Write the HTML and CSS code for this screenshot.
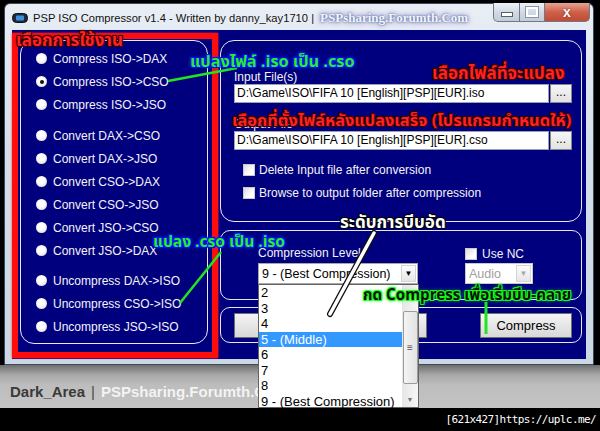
FILE: index.html
```html
<!DOCTYPE html>
<html lang="th">
<head>
    <meta charset="UTF-8">
    <title>PSP ISO Compressor v1.4</title>
    <link rel="stylesheet" href="styles.css">
</head>
<body>
<div class="screen">
    <div class="window">
        <div class="titlebar">
            <svg class="app-icon" width="16" height="10" viewBox="0 0 16 10">
                <rect x="0.5" y="0.5" width="15" height="9" rx="4" fill="#1d2a3a" stroke="#0b1118"/>
                <rect x="4" y="2.5" width="8" height="5" rx="1" fill="#3f8fe0"/>
            </svg>
            <span class="title">PSP ISO Compressor v1.4 - Written by danny_kay1710 |</span>
            <span class="title-site">PSPsharing.Forumth.Com</span>
            <div class="caption-buttons">
                <div class="cap-btn cap-min"><span class="min-bar"></span></div>
                <div class="cap-btn cap-max"><span class="max-box"></span></div>
                <div class="cap-btn cap-close">x</div>
            </div>
        </div>
        <div class="client">
            <div class="mode-frame">
                <div class="groupbox modes">
                    <div class="radio-group">
                        <div class="radio"><span class="dot"></span>Compress ISO-&gt;DAX</div>
                        <div class="radio"><span class="dot checked"></span>Compress ISO-&gt;CSO</div>
                        <div class="radio"><span class="dot"></span>Compress ISO-&gt;JSO</div>
                    </div>
                    <div class="radio-group gap8">
                        <div class="radio"><span class="dot"></span>Convert DAX-&gt;CSO</div>
                        <div class="radio"><span class="dot"></span>Convert DAX-&gt;JSO</div>
                        <div class="radio"><span class="dot"></span>Convert CSO-&gt;DAX</div>
                        <div class="radio"><span class="dot"></span>Convert CSO-&gt;JSO</div>
                        <div class="radio"><span class="dot"></span>Convert JSO-&gt;CSO</div>
                        <div class="radio"><span class="dot"></span>Convert JSO-&gt;DAX</div>
                    </div>
                    <div class="radio-group gap7">
                        <div class="radio"><span class="dot"></span>Uncompress DAX-&gt;ISO</div>
                        <div class="radio"><span class="dot"></span>Uncompress CSO-&gt;ISO</div>
                        <div class="radio"><span class="dot"></span>Uncompress JSO-&gt;ISO</div>
                    </div>
                </div>
            </div>

            <div class="right-col">
                <div class="groupbox files">
                    <div class="field-label">Input File(s)</div>
                    <div class="file-row">
                        <div class="textbox">D:\Game\ISO\FIFA 10 [English][PSP][EUR].iso</div>
                        <div class="browse">...</div>
                    </div>
                    <div class="field-label second">Output File</div>
                    <div class="file-row">
                        <div class="textbox">D:\Game\ISO\FIFA 10 [English][PSP][EUR].cso</div>
                        <div class="browse">...</div>
                    </div>
                    <div class="checks">
                        <div class="check"><span class="box"></span>Delete Input file after conversion</div>
                        <div class="check"><span class="box"></span>Browse to output folder after compression</div>
                    </div>
                </div>

                <div class="groupbox level">
                    <div class="level-col wide">
                        <div class="field-label">Compression Level</div>
                        <div class="combo">
                            <span class="combo-text">9 - (Best Compression)</span>
                            <span class="combo-btn">&#9660;</span>
                        </div>
                    </div>
                    <div class="level-col narrow">
                        <div class="check nc"><span class="box"></span>Use NC</div>
                        <div class="combo disabled">
                            <span class="combo-text">Audio</span>
                            <span class="combo-btn">&#9660;</span>
                        </div>
                    </div>
                </div>

                <div class="groupbox actions">
                    <div class="push about">About</div>
                    <div class="push compress">Compress</div>
                </div>
            </div>
        </div>
    </div>

    <div class="desk">
        <span class="desk-name">Dark_Area</span>
        <span class="desk-bar">|</span>
        <span class="desk-site">PSPsharing.Forumth.Com</span>
    </div>
    <div class="strip">[621x427]https://uplc.me/</div>

    <!-- opened list of the compression combo -->
    <div class="droplist">
        <div class="items">
            <div class="item">2</div>
            <div class="item">3</div>
            <div class="item">4</div>
            <div class="item selected">5 - (Middle)</div>
            <div class="item">6</div>
            <div class="item">7</div>
            <div class="item">8</div>
            <div class="item">9 - (Best Compression)</div>
        </div>
        <div class="scrollbar">
            <span class="arrow up">&#9650;</span>
            <span class="thumb">&#8801;</span>
            <span class="arrow down">&#9660;</span>
        </div>
    </div>

    <!-- hand drawn notes on top of the screenshot -->
    <svg class="pointers" width="600" height="431" viewBox="0 0 600 431">
        <line x1="168" y1="81" x2="237" y2="68" stroke="#1fe61f" stroke-width="2.5"/>
        <line x1="180" y1="303" x2="221" y2="252" stroke="#1fe61f" stroke-width="2.5"/>
        <line x1="486" y1="302" x2="486" y2="334" stroke="#1fe61f" stroke-width="3"/>
        <line x1="374" y1="233" x2="330" y2="314" stroke="#111" stroke-width="6" stroke-linecap="round"/>
        <line x1="374" y1="233" x2="330" y2="314" stroke="#fff" stroke-width="3.5" stroke-linecap="round"/>
    </svg>
    <div class="note red note-mode">เลือกการใช้งาน</div>
    <div class="note green note-iso">แปลงไฟล์ .iso เป็น .cso</div>
    <div class="note red note-input">เลือกไฟล์ที่จะแปลง</div>
    <div class="note red note-output">เลือกที่ตั้งไฟล์หลังแปลงเสร็จ (โปรแกรมกำหนดให้)</div>
    <div class="note white note-level">ระดับการบีบอัด</div>
    <div class="note green note-cso">แปลง .cso เป็น .iso</div>
    <div class="note black note-go">กด Compress เพื่อเริ่มบีบ-คลาย</div>
</div>
</body>
</html>
```

FILE: styles.css
```css
body {
    margin: 0;
    background: #000;
    font-family: 'Liberation Sans', Arial, sans-serif;
    font-size: 12px;
}

.screen {
    position: relative;
    width: 600px;
    height: 431px;
    overflow: hidden;
    background: #000;
    display: flex;
    flex-direction: column;
}

/* window frame */
.window {
    margin: 3px 6px 0 4px;
    height: 362px;
    box-sizing: border-box;
    border: 1px solid #3d4a58;
    border-radius: 6px 6px 0 0;
    padding: 0 7px 5px 7px;
    background: linear-gradient(#e9eef5, #d5dfeb 40%, #cbd7e5);
    display: flex;
    flex-direction: column;
}

.titlebar {
    height: 26px;
    display: flex;
    align-items: center;
    gap: 3px;
    position: relative;
}

.app-icon {
    margin: 2px 2px 0 0;
}

.title {
    color: #111;
    font-size: 11.2px;
    margin-top: 1px;
}

.title-site {
    font-family: 'Liberation Serif', serif;
    font-weight: 700;
    font-size: 13px;
    color: #f2f6ff;
    margin: 1px 0 0 3px;
    text-shadow: 0 0 2px #4a6294, 0 0 4px #7288b8, 0 0 7px #b090c8;
}

.caption-buttons {
    position: absolute;
    right: -4px;
    top: -1px;
    display: flex;
}

.cap-btn {
    height: 19px;
    box-sizing: border-box;
    border: 1px solid #6d7a8a;
    border-top: none;
    display: flex;
    align-items: center;
    justify-content: center;
    background: linear-gradient(#eef2f7, #d2dae4 50%, #c2ccd8);
}

.cap-min {
    width: 27px;
    border-radius: 0 0 0 5px;
}

.cap-max {
    width: 25px;
    border-left: none;
}

.cap-close {
    width: 45px;
    border-left: none;
    border-radius: 0 0 5px 0;
    background: linear-gradient(#e8a493, #d0604a 50%, #c24a32);
    color: #fff;
    font-weight: 700;
    font-size: 14px;
    line-height: 14px;
    text-shadow: 0 0 2px #6a1a0c;
}

.min-bar {
    width: 10px;
    height: 3px;
    background: #fff;
    border: 1px solid #55606e;
    margin-top: 5px;
}

.max-box {
    width: 8px;
    height: 6px;
    border: 2px solid #fff;
    outline: 1px solid #8a96a4;
}

/* client area */
.client {
    flex: 1;
    background: #00007f;
    display: flex;
    align-items: flex-start;
    padding-top: 3px;
    color: #f4f4f4;
}

.mode-frame {
    width: 206px;
    height: 325px;
    box-sizing: border-box;
    border: 6px solid #ff0d0d;
    box-shadow: 0 0 2px #ff3030;
}

.groupbox {
    box-sizing: border-box;
    border: 1px solid #e8e8f4;
    border-radius: 14px;
}

.modes {
    margin: 1px 0 0 2px;
    width: 188px;
    height: 304px;
    padding: 6px 0 0 15px;
}

.radio-group.gap8 {
    margin-top: 8px;
}

.radio-group.gap7 {
    margin-top: 7px;
}

.radio {
    height: 23px;
    display: flex;
    align-items: center;
    gap: 6px;
    white-space: nowrap;
}

.dot {
    width: 11px;
    height: 11px;
    border-radius: 50%;
    background: radial-gradient(circle at 45% 40%, #fff 35%, #e4e4e4 70%, #b8b8b8);
    display: flex;
    align-items: center;
    justify-content: center;
}

.dot.checked::after {
    content: "";
    width: 4px;
    height: 4px;
    border-radius: 50%;
    background: #111;
}

.right-col {
    margin: 7px 0 0 2px;
    width: 362px;
    display: flex;
    flex-direction: column;
}

.files {
    height: 182px;
    padding: 30px 9px 0 13px;
}

.field-label {
    line-height: 13px;
    height: 13px;
    white-space: nowrap;
}

.field-label.second {
    margin-top: 15px;
}

.file-row {
    display: flex;
    gap: 1px;
    height: 19px;
}

.textbox {
    width: 315px;
    box-sizing: border-box;
    background: #fff;
    border: 1px solid #9aa3ad;
    color: #000;
    padding: 0 2px;
    line-height: 17px;
    white-space: nowrap;
    overflow: hidden;
}

.browse {
    width: 22px;
    box-sizing: border-box;
    border: 1px solid #8a8a8a;
    background: linear-gradient(#f6f6f6, #e2e2e2);
    color: #000;
    text-align: center;
    line-height: 14px;
}

.checks {
    margin: 8px 0 0 9px;
}

.check {
    height: 23px;
    display: flex;
    align-items: center;
    gap: 4px;
    white-space: nowrap;
}

.box {
    width: 12px;
    height: 12px;
    box-sizing: border-box;
    border: 1px solid #c9c9c9;
    background: linear-gradient(135deg, #dcdcdc, #fff 70%);
}

.level {
    margin-top: 8px;
    height: 70px;
    border-radius: 10px;
    padding: 16px 0 0 37px;
    display: flex;
    gap: 47px;
}

.level-col.wide {
    width: 160px;
}

.level-col.narrow {
    width: 68px;
}

.check.nc {
    height: 13px;
    gap: 5px;
}

.combo {
    margin-top: 3px;
    height: 21px;
    box-sizing: border-box;
    border: 1px solid #a7a7a7;
    background: #fff;
    color: #000;
    display: flex;
    align-items: center;
    padding-left: 3px;
    font-size: 12.5px;
}

.combo-text {
    flex: 1;
    white-space: nowrap;
}

.combo-btn {
    width: 15px;
    height: 17px;
    margin-right: 1px;
    box-sizing: border-box;
    border: 1px solid #d4d4d4;
    background: linear-gradient(#fdfdfd, #e6e6e6);
    font-size: 8px;
    text-align: center;
    line-height: 16px;
}

.combo.disabled {
    border-color: #c8c8c8;
    color: #a0a0a0;
}

.combo.disabled .combo-btn {
    color: #a8a8a8;
}

.actions {
    margin-top: 7px;
    height: 36px;
    border-radius: 10px;
    padding: 5px 9px 0 13px;
    display: flex;
    justify-content: space-between;
}

.push {
    height: 25px;
    box-sizing: border-box;
    border: 1px solid #707070;
    background: linear-gradient(#f4f4f4, #e6e6e6 50%, #d8d8d8);
    color: #000;
    font-size: 13px;
    display: flex;
    align-items: center;
    justify-content: center;
}

.push.about {
    width: 193px;
}

.push.compress {
    width: 92px;
}

/* desktop under the window */
.desk {
    height: 43px;
    background: linear-gradient(#6e6e6e, #a8a8a8 10px, #bdbdbd 20px, #c4c4c4);
    display: flex;
    align-items: center;
    gap: 6px;
    padding: 10px 0 0 10px;
    box-sizing: border-box;
    font-weight: 700;
    font-size: 15px;
}

.desk-name {
    color: #3a3a3a;
}

.desk-bar {
    color: #4a4a4a;
    font-weight: 400;
}

.desk-site {
    color: #f3f3f3;
}

.strip {
    flex: 1;
    background: #000;
    color: #fff;
    text-align: right;
    padding: 5px 4px 0 0;
    font-family: 'DejaVu Sans Mono', monospace;
    font-size: 11px;
    letter-spacing: -0.6px;
}

/* opened combo list */
.droplist {
    position: absolute;
    left: 258px;
    top: 284px;
    width: 161px;
    height: 124px;
    box-sizing: border-box;
    border: 1px solid #646464;
    background: #fff;
    display: flex;
}

.items {
    flex: 1;
}

.item {
    height: 15.5px;
    line-height: 15.5px;
    padding-left: 2px;
    color: #000;
    font-size: 13px;
    white-space: nowrap;
}

.item.selected {
    background: #3399ff;
    color: #fff;
}

.scrollbar {
    width: 16px;
    background: linear-gradient(90deg, #e6e6e6, #f6f6f6);
    display: flex;
    flex-direction: column;
    align-items: center;
}

.arrow {
    height: 14px;
    font-size: 7px;
    color: #777;
    line-height: 14px;
}

.arrow.up {
    color: #cfcfcf;
}

.thumb {
    margin-top: 12px;
    width: 15px;
    height: 73px;
    box-sizing: border-box;
    border: 1px solid #9c9c9c;
    border-radius: 2px;
    background: linear-gradient(90deg, #f4f4f4, #e2e2e2);
    color: #555;
    font-size: 10px;
    display: flex;
    align-items: center;
    justify-content: center;
}

.arrow.down {
    margin-top: auto;
}

/* annotations */
.pointers {
    position: absolute;
    left: 0;
    top: 0;
}

.note {
    position: absolute;
    font-family: 'Noto Sans Thai', 'Loma', 'Garuda', 'Tlwg Typo', 'Noto Sans', sans-serif;
    font-weight: 700;
    font-size: 17px;
    line-height: 20px;
    white-space: nowrap;
}

.note.red {
    color: #ff2222;
    text-shadow: 1px 1px 0 #3a0000, -1px -1px 0 #3a0000, 1px -1px 0 #3a0000, -1px 1px 0 #3a0000, 0 0 3px #000;
}

.note.green {
    color: #28ee28;
    text-shadow: 1px 1px 0 #0010ff, -1px -1px 0 #0010ff, 1px -1px 0 #0010ff, -1px 1px 0 #0010ff, 0 0 4px #2040ff;
}

.note.white {
    color: #fff;
    text-shadow: 1px 1px 0 #000, -1px -1px 0 #000, 1px -1px 0 #000, -1px 1px 0 #000;
}

.note.black {
    color: #111;
    text-shadow: 1px 1px 0 #10ff10, -1px -1px 0 #10ff10, 1px -1px 0 #10ff10, -1px 1px 0 #10ff10, 0 0 4px #10ff10;
}

.note-mode {
    left: 16px;
    top: 31px;
}

.note-iso {
    left: 190px;
    top: 52px;
    font-size: 16.3px;
}

.note-input {
    left: 432px;
    top: 64px;
}

.note-output {
    left: 232px;
    top: 111px;
    font-size: 16.4px;
}

.note-level {
    left: 340px;
    top: 213px;
}

.note-cso {
    left: 153px;
    top: 232px;
    font-size: 15.6px;
}

.note-go {
    left: 363px;
    top: 286px;
    font-size: 15.2px;
}
```
